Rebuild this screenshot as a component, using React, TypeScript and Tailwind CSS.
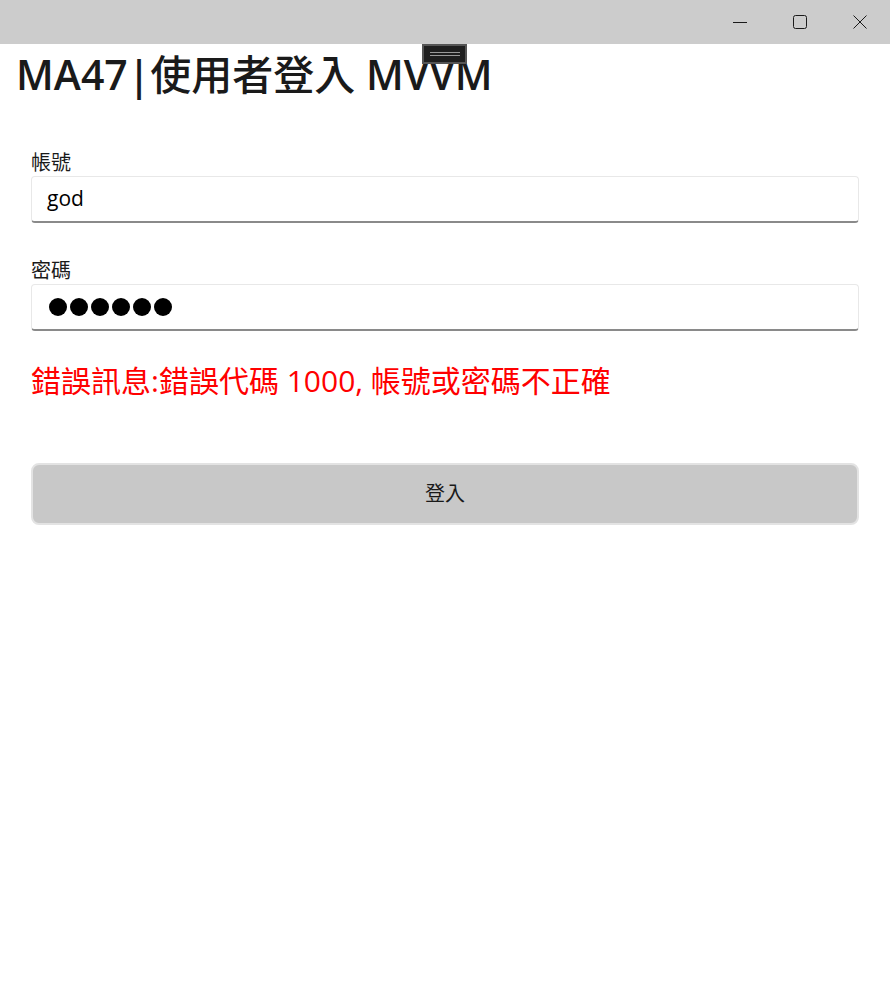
import React from 'react';

const font = { fontFamily: '"Open Sans", "Noto Sans CJK TC", sans-serif' };

const TitleBar: React.FC = () => (
  <div className="h-[44px] bg-[#cccccc] flex justify-end items-center">
    <button className="w-[60px] h-[44px] flex items-center justify-center">
      <svg width="16" height="16" viewBox="0 0 16 16">
        <path d="M1 8.5h14" stroke="#1a1a1a" strokeWidth="1" />
      </svg>
    </button>
    <button className="w-[60px] h-[44px] flex items-center justify-center">
      <svg width="16" height="16" viewBox="0 0 16 16">
        <rect x="1.5" y="1.5" width="13" height="13" rx="2" fill="none" stroke="#1a1a1a" strokeWidth="1" />
      </svg>
    </button>
    <button className="w-[60px] h-[44px] flex items-center justify-center">
      <svg width="16" height="16" viewBox="0 0 16 16">
        <path d="M1.5 1.5l13 13M14.5 1.5l-13 13" stroke="#1a1a1a" strokeWidth="1" />
      </svg>
    </button>
  </div>
);

const Field: React.FC<{ label: string; children: React.ReactNode }> = ({ label, children }) => (
  <div className="flex flex-col">
    <label className="text-[20px] leading-[26px] text-[#1a1a1a]">{label}</label>
    <div className="h-[47px] rounded-[4px] border border-[#e8e8e8] border-b-2 border-b-[#8a8a8a] bg-white flex items-center px-[15px]">
      {children}
    </div>
  </div>
);

export default function App() {
  return (
    <div className="w-[890px] h-[1004px] bg-white relative" style={font}>
      <TitleBar />
      <div className="absolute left-[422px] top-[44px] w-[45px] h-[20px] bg-[#1f1f1f] border-2 border-[#555555] flex flex-col items-center justify-center gap-[2px]">
        <div className="w-[30px] h-[1px] bg-[#9a9a9a]" />
        <div className="w-[30px] h-[1px] bg-[#9a9a9a]" />
      </div>
      <h1 className="pl-[16px] pt-[4px] text-[41px] leading-[52px] font-semibold text-[#1a1a1a]">
        MA47|<span className="font-medium">使用者登入</span> MVVM
      </h1>
      <div className="px-[31px] pt-[50px] flex flex-col gap-[35px]">
        <Field label="帳號">
          <span className="text-[21px] text-black">god</span>
        </Field>
        <Field label="密碼">
          <div className="flex gap-[3px] pl-[2px]">
            {[0, 1, 2, 3, 4, 5].map((i) => (
              <span key={i} className="w-[18px] h-[18px] rounded-full bg-black" />
            ))}
          </div>
        </Field>
      </div>
      <div className="px-[31px] pt-[28px] text-[30px] leading-[44px] text-[#ff0000]">
        錯誤訊息:錯誤代碼 1000, 帳號或密碼不正確
      </div>
      <div className="px-[31px] pt-[60px]">
        <button className="w-full h-[62px] rounded-[8px] bg-[#c8c8c8] border-2 border-[#e3e3e3] text-[20px] text-[#1a1a1a]">
          登入
        </button>
      </div>
    </div>
  );
}
